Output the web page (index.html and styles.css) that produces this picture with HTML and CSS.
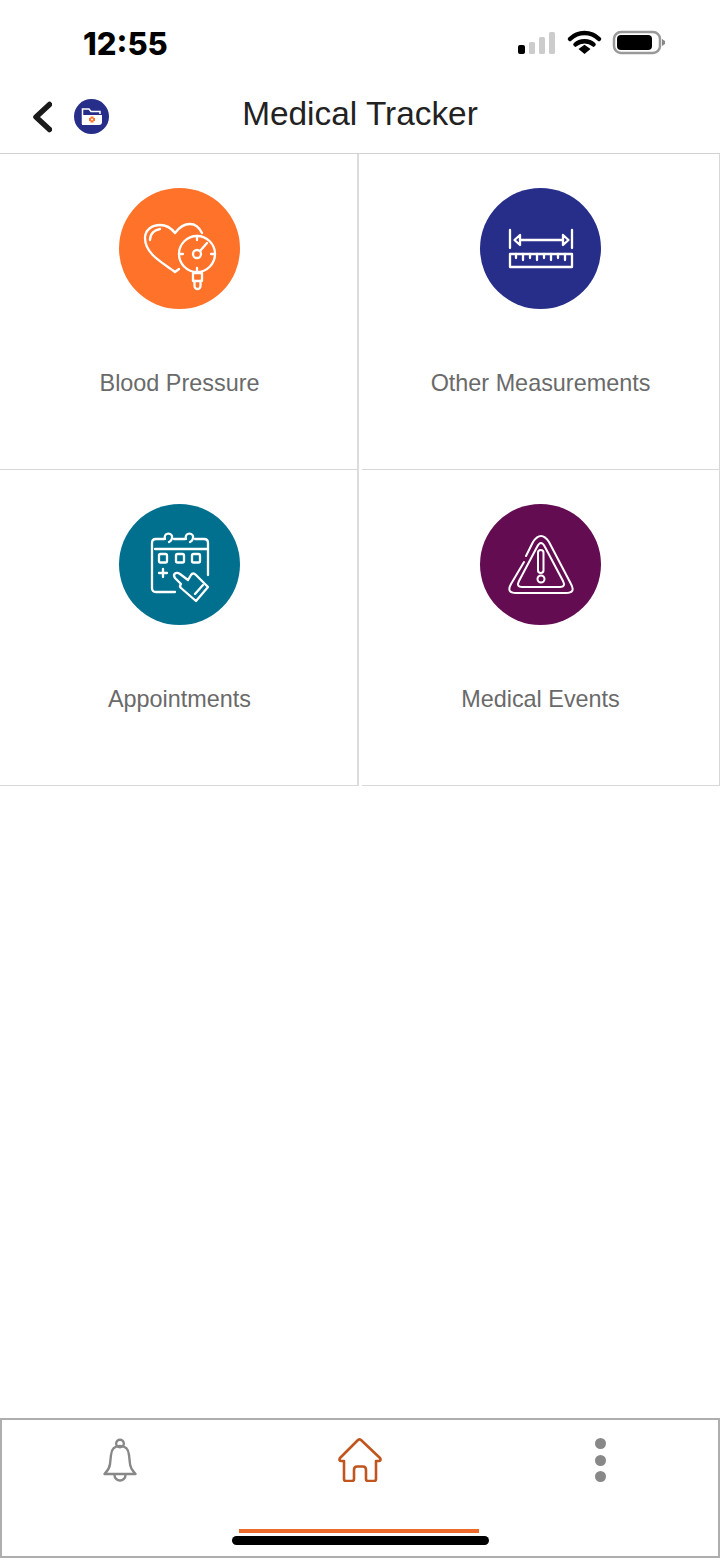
FILE: index.html
```html
<!DOCTYPE html>
<html lang="en">
<head>
  <meta charset="UTF-8">
  <title>Medical Tracker</title>
  <meta name="viewport" content="width=device-width, initial-scale=1.0">
  <link rel="stylesheet" href="styles.css">
</head>
<body>
  <div class="status-bar">
    <span class="clock">12:55</span>
    <svg class="status-icons" width="150" height="26" viewBox="0 0 150 26">
      <rect x="3" y="16" width="7" height="9" rx="2" fill="#000"/>
      <rect x="14" y="13" width="6" height="12" rx="1.5" fill="#ccc"/>
      <rect x="24" y="8" width="6" height="17" rx="1.5" fill="#ccc"/>
      <rect x="34" y="3" width="6" height="22" rx="1.5" fill="#ccc"/>
      <path d="M55 10 C63 2 76 2 84 10" fill="none" stroke="#000" stroke-width="4.500" stroke-linecap="round"/>
      <path d="M60.500 15.500 C65 11 74 11 78.500 15.500" fill="none" stroke="#000" stroke-width="4.500" stroke-linecap="round"/>
      <path d="M63.500 20 L69.500 15.800 L75.500 20 L69.500 25 Z" fill="#000"/>
      <rect x="99" y="3" width="46" height="21" rx="7" fill="none" stroke="#999" stroke-width="2.500"/>
      <rect x="102" y="6" width="35" height="15" rx="4" fill="#000"/>
      <path d="M147 10 L150 12 V15 L147 17 Z" fill="#888"/>
    </svg>
  </div>

  <header class="top-bar">
    <div class="top-left">
      <svg width="20" height="32" viewBox="0 0 20 32">
        <path d="M17.500 3.500 L4 16 L17.500 28.500" fill="none" stroke="#1a1a1a" stroke-width="5.500" stroke-linecap="round" stroke-linejoin="round"/>
      </svg>
      <svg width="35" height="35" viewBox="0 0 35 35">
        <circle cx="17.500" cy="17.500" r="17.500" fill="#272e8a"/>
        <path d="M8.500 25 V10 H15 L17 12.500 H26 V15" fill="none" stroke="#fff" stroke-width="1.500"/>
        <path d="M8 26 V16 H28 V23 Q28 26 25 26 Z" fill="#fff"/>
        <path d="M18 17.500 V23.500 M15 20.500 H21" fill="none" stroke="#ff7229" stroke-width="3"/>
        <circle cx="18" cy="20.500" r="1" fill="#fff"/>
      </svg>
    </div>
    <h1 class="title">Medical Tracker</h1>
    <div></div>
  </header>

  <main class="grid">
    <a class="cell cell-left">
      <span class="badge badge-orange">
        <svg width="121" height="121" viewBox="0 0 121 121" class="line-icon">
          <path d="M60 81 L56 84 C46 76 26 67 26 50 C26 42 33 37 41 37 C48 37 53 41 56 45 C59 41 64 36 71 36 C76 36 80 39 83 45"/>
          <path d="M31 52 C31 46 35 42 41 41"/>
          <circle cx="78" cy="66" r="18"/>
          <circle cx="78" cy="66" r="4"/>
          <path d="M81 63 L88 55 M78 48 V52 M60 66 H64 M92 66 H96 M78 80 V84"/>
          <path d="M74 85 H83 V93 H74 Z"/>
          <path d="M75.500 93 V98 A3 3 0 0 0 81.500 98 V93"/>
        </svg>
      </span>
      <span class="label">Blood Pressure</span>
    </a>
    <a class="cell cell-right">
      <span class="badge badge-navy">
        <svg width="121" height="121" viewBox="0 0 121 121" class="line-icon">
          <path d="M30 42 V60 M92 42 V60"/>
          <path d="M40 52 H83"/>
          <path d="M40 47 L34.500 52 L40 57 Z M83 47 L88.500 52 L83 57 Z"/>
          <rect x="30" y="66" width="62" height="13"/>
          <path d="M36 66 V70 M43 66 V72 M50 66 V70 M57 66 V72 M64 66 V70 M71 66 V72 M78 66 V70 M85 66 V72"/>
        </svg>
      </span>
      <span class="label">Other Measurements</span>
    </a>
    <a class="cell cell-left">
      <span class="badge badge-teal">
        <svg width="121" height="121" viewBox="0 0 121 121" class="line-icon">
          <path d="M89 71 V39 Q89 35 85 35 H76 M66 35 H55 M45 35 H37 Q33 35 33 39 V84 Q33 88 37 88 H56"/>
          <path d="M36 45 H89"/>
          <path d="M46 35 C44 29 52 28 53 32 C53.500 35 52 37 50 38"/>
          <path d="M67 35 C65 29 73 28 74 32 C74.500 35 73 37 71 38"/>
          <rect x="40" y="50" width="8" height="8.500" rx="1.500"/>
          <rect x="57" y="50" width="8" height="8.500" rx="1.500"/>
          <rect x="73" y="50" width="8" height="8.500" rx="1.500"/>
          <path d="M40 69 H48 M44 65 V73"/>
          <path d="M62 80 L56 74 Q54 71 56 69.500 Q58 68 61 70 L69 76 L72 71 Q74 68 77 71 L89 83 L77 97 L62 84 Q60 82 62 80 Z"/>
          <path d="M76 90 L84 81"/>
        </svg>
      </span>
      <span class="label">Appointments</span>
    </a>
    <a class="cell cell-right">
      <span class="badge badge-purple">
        <svg width="121" height="121" viewBox="0 0 121 121" class="line-icon thin">
          <path d="M44 58 L31 80 Q26 89 36 89 H86 Q96 89 91 80 L69 38 Q61 26 53 38 L46 52"/>
          <path d="M39 77 L57 43 Q61 35 65 43 L83 77 Q86 83 80 83 H42 Q36 83 39 77 Z"/>
          <rect x="58" y="46" width="5.500" height="23" rx="2.750"/>
          <circle cx="61" cy="75" r="3.500"/>
        </svg>
      </span>
      <span class="label">Medical Events</span>
    </a>
  </main>

  <nav class="tab-bar">
    <a class="tab">
      <svg width="36" height="44" viewBox="-1 0 36 44" fill="none" stroke="#888" stroke-width="2.400" stroke-linejoin="round">
        <circle cx="17" cy="5.500" r="3.800"/>
        <path d="M17 8 C10 8 8.500 12 8 17 L7 26 C6.500 31 4 33 1.500 36 H32.500 C30 33 27.500 31 27 26 L26 17 C25.500 12 24 8 17 8 Z"/>
        <path d="M11.500 37 A5.500 5.500 0 0 0 22.500 37"/>
      </svg>
    </a>
    <a class="tab tab-active">
      <svg width="44" height="44" viewBox="0 0 44 44" fill="none" stroke="#c0561e" stroke-width="2.600" stroke-linejoin="round">
        <path d="M20 2 Q21.500 0.800 23 2 L42 20 Q43.500 22.500 41 23 H38 V41 Q38 43 36 43 H30 Q28 43 28 41 V32 Q28 28.500 25 28.500 H19 Q16 28.500 16 32 V41 Q16 43 14 43 H8 Q6 43 6 41 V23 H3 Q0.500 22.500 2 20 Z"/>
      </svg>
    </a>
    <a class="tab">
      <span class="dots"><i></i><i></i><i></i></span>
    </a>
    <span class="home-indicator"></span>
  </nav>
</body>
</html>
```

FILE: styles.css
```css
* { box-sizing: border-box; }
body { margin: 0; min-height: 1558px; display: flex; flex-direction: column; font-family: "Liberation Sans", Arial, sans-serif; background: #fff; }

.status-bar { height: 76px; display: flex; justify-content: space-between; padding: 29px 55px 0 83px; }
.clock { margin-top: 1px; font-family: Inter, sans-serif; font-weight: 800; font-size: 31px; line-height: 27px; color: #000; }

.top-bar { height: 78px; display: grid; grid-template-columns: 1fr auto 1fr; align-items: center; border-bottom: 1px solid #d2d2d2; }
.top-left { display: flex; align-items: center; gap: 22px; padding: 4px 0 0 32px; }
.title { margin: 0 0 2px; font-size: 33.400px; font-weight: 400; color: #222; }

.grid { flex: 1; display: grid; grid-template-columns: 359px 358px; grid-auto-rows: 316px; justify-content: space-between; align-content: start; column-gap: 3px; }
.cell { display: flex; flex-direction: column; align-items: center; padding-top: 34px; border-bottom: 1px solid #d8d8d8; }
.cell-left { padding-left: 2px; border-right: 2px solid #dcdcdc; }
.cell-right { border-right: 1px solid #d8d8d8; }
.badge { width: 121px; height: 121px; border-radius: 50%; display: block; }
.badge-orange { background: #ff7229; }
.badge-navy { background: #272e8a; }
.badge-teal { background: #00708e; }
.badge-purple { background: #640c52; }
.line-icon { display: block; fill: none; stroke: #fff; stroke-width: 2.300; stroke-linecap: round; stroke-linejoin: round; }
.line-icon.thin { stroke-width: 2; }
.label { margin-top: 61px; font-size: 23.400px; line-height: 26px; color: #6a6a6a; }

.tab-bar { position: relative; height: 140px; display: grid; grid-template-columns: repeat(3, 240px); justify-content: center; border: 2px solid #aeaeae; }
.tab { display: flex; justify-content: center; align-items: flex-start; padding-top: 18px; }
.tab-active { margin: 0 1px 23px -1px; padding-left: 2px; border-bottom: 4px solid #ec6a2a; }
.dots { display: flex; flex-direction: column; gap: 5.500px; }
.dots i { display: block; width: 11px; height: 11px; border-radius: 50%; background: #888; }
.home-indicator { position: absolute; left: 230px; bottom: 11px; width: 257px; height: 9px; border-radius: 5px; background: #000; }
```
